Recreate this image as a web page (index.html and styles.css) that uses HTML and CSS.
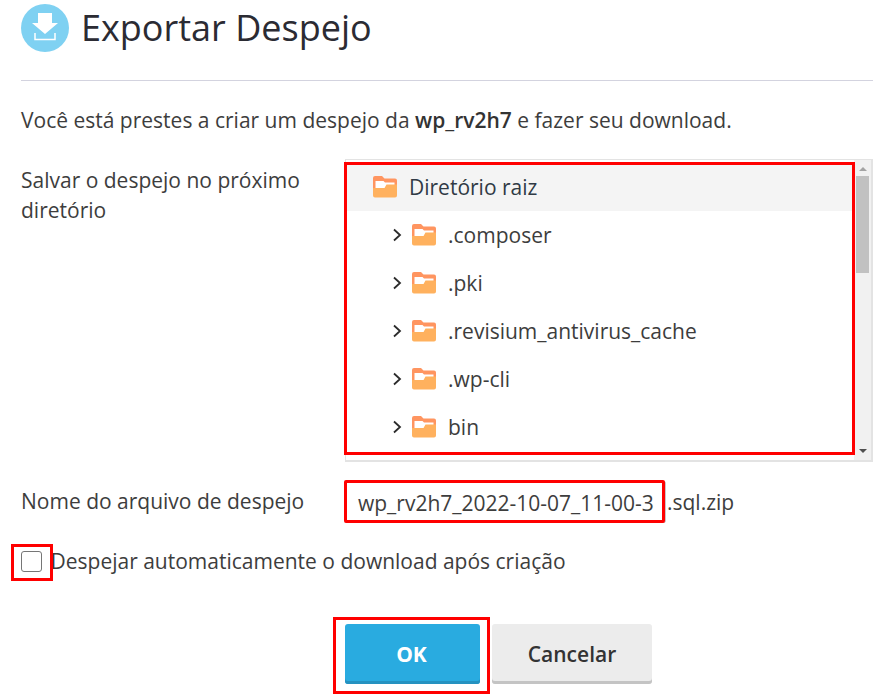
FILE: index.html
```html
<!DOCTYPE html>
<html lang="pt">
<head>
<meta charset="utf-8">
<title>Exportar Despejo</title>
<link rel="stylesheet" href="styles.css">
</head>
<body>
<main class="page">
  <header class="head">
    <svg class="head-icon" width="48" height="48" viewBox="0 0 48 48" aria-hidden="true">
      <circle cx="24" cy="24" r="24" fill="#7fd1f2"/>
      <path d="M17 9h14v10h6L24 30 11 19h6z" fill="#fff"/>
      <path d="M14 29v6.500h20V29" fill="none" stroke="#fff" stroke-width="1.500"/>
    </svg>
    <h1 class="title">Exportar Despejo</h1>
  </header>
  <hr class="rule">
  <p class="intro">Você está prestes a criar um despejo da <strong>wp_rv2h7</strong> e fazer seu download.</p>

  <section class="form-row form-row-tree">
    <div class="label label-tree">Salvar o despejo no próximo diretório</div>
    <div class="tree-box">
      <div class="tree">
        <div class="tree-row root">
          <svg class="folder" width="24" height="22" viewBox="0 0 24 22"><use href="#folder"/></svg>
          <span>Diretório raiz</span>
        </div>
        <div class="tree-row child">
          <svg class="chev" width="10" height="14" viewBox="0 0 10 14"><use href="#chev"/></svg>
          <svg class="folder" width="24" height="22" viewBox="0 0 24 22"><use href="#folder"/></svg>
          <span>.composer</span>
        </div>
        <div class="tree-row child">
          <svg class="chev" width="10" height="14" viewBox="0 0 10 14"><use href="#chev"/></svg>
          <svg class="folder" width="24" height="22" viewBox="0 0 24 22"><use href="#folder"/></svg>
          <span>.pki</span>
        </div>
        <div class="tree-row child">
          <svg class="chev" width="10" height="14" viewBox="0 0 10 14"><use href="#chev"/></svg>
          <svg class="folder" width="24" height="22" viewBox="0 0 24 22"><use href="#folder"/></svg>
          <span>.revisium_antivirus_cache</span>
        </div>
        <div class="tree-row child">
          <svg class="chev" width="10" height="14" viewBox="0 0 10 14"><use href="#chev"/></svg>
          <svg class="folder" width="24" height="22" viewBox="0 0 24 22"><use href="#folder"/></svg>
          <span>.wp-cli</span>
        </div>
        <div class="tree-row child">
          <svg class="chev" width="10" height="14" viewBox="0 0 10 14"><use href="#chev"/></svg>
          <svg class="folder" width="24" height="22" viewBox="0 0 24 22"><use href="#folder"/></svg>
          <span>bin</span>
        </div>
      </div>
      <div class="scrollbar">
        <span class="arrow arrow-up"></span>
        <span class="thumb"></span>
        <span class="arrow arrow-down"></span>
      </div>
      <div class="mark mark-tree"></div>
    </div>
  </section>

  <section class="form-row form-row-file">
    <div class="label label-file">Nome do arquivo de despejo</div>
    <div class="file">
      <div class="file-input">wp_rv2h7_2022-10-07_11-00-3<div class="mark mark-file"></div></div>
      <span class="file-ext">.sql.zip</span>
    </div>
  </section>

  <section class="check-row">
    <span class="checkbox"><span class="mark mark-check"></span></span>
    <span class="check-label">Despejar automaticamente o download após criação</span>
  </section>

  <section class="actions">
    <button class="btn btn-ok" type="button">OK<span class="mark mark-ok"></span></button>
    <button class="btn btn-cancel" type="button">Cancelar</button>
  </section>
</main>

<svg class="defs" width="0" height="0" aria-hidden="true">
  <defs>
    <g id="folder">
      <path d="M0 2a2 2 0 0 1 2-2h7l2.500 2.500H22a2 2 0 0 1 2 2V12H0z" fill="#ff9560"/>
      <path d="M2.500 5h8l1.500 1.500h9.500V12H2.500z" fill="#fff"/>
      <path d="M0 12h11.500l2-3.500H24V19.500a2 2 0 0 1-2 2H2a2 2 0 0 1-2-2z" fill="#ffb15e"/>
    </g>
    <path id="chev" d="M2 1.500 8 7l-6 5.500" fill="none" stroke="#2b2b2b" stroke-width="1.800"/>
  </defs>
</svg>
</body>
</html>
```
FILE: styles.css
```css
* { box-sizing: border-box; }
html, body { margin: 0; padding: 0; background: #fff; }
body {
  width: 887px;
  height: 697px;
  overflow: hidden;
  font-family: "Open Sans", "Noto Sans", sans-serif;
  font-size: 21px;
  line-height: 30px;
  color: #3d3d3d;
}
.page { padding: 4px 14px 0 21px; }
.defs { position: absolute; }

.head { display: flex; align-items: center; gap: 12px; height: 48px; }
.head-icon { flex: none; display: block; }
.title { margin: 0; font-size: 36px; font-weight: 400; line-height: 48px; color: #2b2b33; }

.rule { margin: 28px 0 0; border: 0; height: 1px; background: #d3d3df; }

.intro { margin: 24px 0 0; }
.intro strong { font-weight: 600; color: #333; }

.form-row { display: flex; }
.form-row-tree { margin-top: 24px; height: 303px; }
.form-row-file { margin-top: 19px; align-items: center; height: 42px; }
.label { width: 324px; flex: none; }
.label-tree { padding-top: 6px; padding-right: 15px; }
.label-file { padding-bottom: 2px; }

.tree-box {
  position: relative;
  width: 528px;
  height: 303px;
  display: flex;
  border: 2px solid #e3e3e3;
  border-left-width: 1px;
  border-top-width: 1px;
}
.tree { flex: 1; padding-top: 3px; overflow: hidden; }
.tree-row { display: flex; align-items: center; height: 48px; color: #3d3d3d; }
.tree-row.root { background: #f4f4f4; padding-left: 27px; color: #303a45; }
.tree-row.child { padding-left: 46px; }
.chev { margin-right: 10px; flex: none; }
.folder { margin-right: 12px; flex: none; display: block; }

.scrollbar {
  width: 17px;
  flex: none;
  background: #f1f1f1;
  display: flex;
  flex-direction: column;
  align-items: center;
}
.arrow { width: 0; height: 0; border-left: 4px solid transparent; border-right: 4px solid transparent; }
.arrow-up { margin-top: 7px; border-bottom: 4px solid #a3a3a3; }
.thumb { width: 13px; height: 97px; margin-top: 5px; background: #c1c1c1; }
.arrow-down { margin-top: auto; margin-bottom: 7px; border-top: 4px solid #505050; }

.file { display: flex; align-items: center; }
.file-input {
  position: relative;
  width: 321px;
  height: 42px;
  line-height: 42px;
  padding-left: 12px;
  border: 1px solid #c8c8c8;
  border-radius: 2px;
  white-space: nowrap;
  color: #3d3d3d;
}
.file-ext { margin-left: 1px; }

.check-row { display: flex; align-items: center; margin-top: 18px; height: 40px; }
.checkbox {
  position: relative;
  width: 21px;
  height: 21px;
  flex: none;
  border: 1px solid #767676;
  border-radius: 3px;
  background: #fff;
  margin-right: 8.5px;
}

.actions { display: flex; gap: 12px; margin: 43px 0 0 324px; }
.btn {
  position: relative;
  height: 60px;
  border: 0;
  border-radius: 3px;
  font-family: inherit;
  font-size: 21px;
  font-weight: 600;
  padding: 0;
}
.btn-ok { width: 135px; padding-right: 2px; background: #29abe0; color: #fff; box-shadow: inset 0 -3px 0 #2592c0; font-weight: 700; }
.btn-cancel { width: 160px; background: #ececec; color: #333; box-shadow: inset 0 -3px 0 #c4c4c4; }

.mark { position: absolute; border: 3px solid #f00; pointer-events: none; }
.mark-tree { left: -2px; top: 2px; width: 511px; height: 293px; }
.mark-file { left: -2px; top: -2px; width: 321px; height: 43px; border-radius: 2px; }
.mark-check { left: -11px; top: -8px; width: 42px; height: 37px; }
.mark-ok { left: -12px; top: -7px; width: 157px; height: 77px; }
```
